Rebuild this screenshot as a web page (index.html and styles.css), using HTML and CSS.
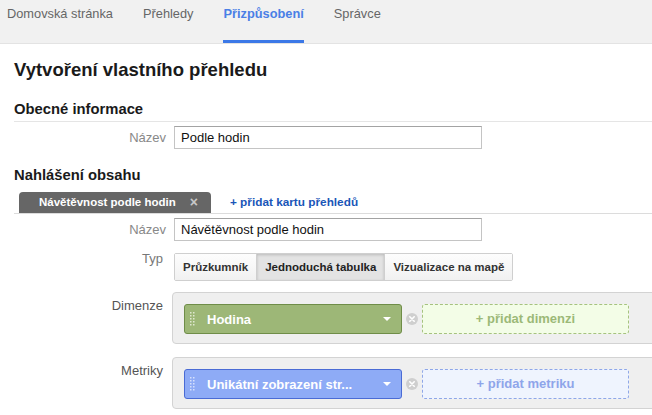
FILE: index.html
```html
<!DOCTYPE html>
<html lang="cs">
<head>
<meta charset="utf-8">
<title>Vytvoření vlastního přehledu</title>
<link rel="stylesheet" href="styles.css">
</head>
<body>
<nav class="topnav">
  <a class="navitem">Domovská stránka</a>
  <a class="navitem">Přehledy</a>
  <a class="navitem active">Přizpůsobení</a>
  <a class="navitem">Správce</a>
</nav>
<main class="page">
  <h1 class="title">Vytvoření vlastního přehledu</h1>
  <h2 class="section ruled">Obecné informace</h2>
  <div class="row row-center first">
    <span class="lbl">Název</span>
    <div class="field">Podle hodin</div>
  </div>

  <h2 class="section content-head">Nahlášení obsahu</h2>
  <div class="tabs">
    <div class="tab">Návětěvnost podle hodin<span class="tab-x">×</span></div>
    <a class="addtab">+ přidat kartu přehledů</a>
  </div>
  <div class="row row-center second">
    <span class="lbl">Název</span>
    <div class="field">Návětěvnost podle hodin</div>
  </div>

  <div class="row row-top typ">
    <span class="lbl lbl-narrow lbl-typ">Typ</span>
    <div class="btngroup">
      <span class="btn">Průzkumník</span>
      <span class="btn selected">Jednoduchá tabulka</span>
      <span class="btn">Vizualizace na mapě</span>
    </div>
  </div>

  <div class="row row-top dim">
    <span class="lbl lbl-narrow lbl-box">Dimenze</span>
    <div class="box">
      <div class="chip chip-green">
        <svg class="dots" width="5" height="14" viewBox="0 0 5 14"><g fill="#dfe8cf"><rect x="0" y="0" width="1.5" height="1.5"/><rect x="3" y="0" width="1.5" height="1.5"/><rect x="0" y="3" width="1.5" height="1.5"/><rect x="3" y="3" width="1.5" height="1.5"/><rect x="0" y="6" width="1.5" height="1.5"/><rect x="3" y="6" width="1.5" height="1.5"/><rect x="0" y="9" width="1.5" height="1.5"/><rect x="3" y="9" width="1.5" height="1.5"/><rect x="0" y="12" width="1.5" height="1.5"/><rect x="3" y="12" width="1.5" height="1.5"/></g></svg>
        <span class="chip-text">Hodina</span>
        <span class="caret"></span>
      </div>
      <svg class="remove" width="12" height="12" viewBox="0 0 12 12"><circle cx="6" cy="6" r="6" fill="#cfcfcf"/><path d="M3.8 3.8 L8.2 8.2 M8.2 3.8 L3.8 8.2" stroke="#fff" stroke-width="1.6" stroke-linecap="round"/></svg>
      <div class="add add-green">+ přidat dimenzi</div>
    </div>
  </div>

  <div class="row row-top met">
    <span class="lbl lbl-narrow lbl-box">Metriky</span>
    <div class="box">
      <div class="chip chip-blue">
        <svg class="dots" width="5" height="14" viewBox="0 0 5 14"><g fill="#d6e0fb"><rect x="0" y="0" width="1.5" height="1.5"/><rect x="3" y="0" width="1.5" height="1.5"/><rect x="0" y="3" width="1.5" height="1.5"/><rect x="3" y="3" width="1.5" height="1.5"/><rect x="0" y="6" width="1.5" height="1.5"/><rect x="3" y="6" width="1.5" height="1.5"/><rect x="0" y="9" width="1.5" height="1.5"/><rect x="3" y="9" width="1.5" height="1.5"/><rect x="0" y="12" width="1.5" height="1.5"/><rect x="3" y="12" width="1.5" height="1.5"/></g></svg>
        <span class="chip-text">Unikátní zobrazení str...</span>
        <span class="caret"></span>
      </div>
      <svg class="remove" width="12" height="12" viewBox="0 0 12 12"><circle cx="6" cy="6" r="6" fill="#cfcfcf"/><path d="M3.8 3.8 L8.2 8.2 M8.2 3.8 L3.8 8.2" stroke="#fff" stroke-width="1.6" stroke-linecap="round"/></svg>
      <div class="add add-blue">+ přidat metriku</div>
    </div>
  </div>
</main>
</body>
</html>
```
FILE: styles.css
```css
html { overflow: hidden; }
body {
  margin: 0;
  font-family: "Liberation Sans", Arial, sans-serif;
  color: #222;
  background: #fff;
}

.topnav {
  display: flex;
  gap: 30px;
  height: 43px;
  padding-left: 7px;
  background: #f1f1f1;
  border-bottom: 1px solid #e3e3e3;
}
.navitem {
  box-sizing: border-box;
  height: 43px;
  padding-top: 6px;
  font-size: 12.8px;
  line-height: 16px;
  color: #666;
  border-bottom: 3px solid transparent;
  cursor: pointer;
}
.navitem.active {
  color: #4a7fe6;
  font-weight: bold;
  border-bottom-color: #3b78e7;
}

.page { padding-left: 14px; }

.title {
  margin: 15px 0 0;
  font-size: 18.5px;
  line-height: 22px;
  font-weight: bold;
  color: #1a1a1a;
}
.section {
  margin: 0;
  font-size: 14.8px;
  line-height: 18px;
  font-weight: bold;
  color: #1a1a1a;
}
.ruled {
  margin-top: 19px;
  padding-bottom: 3px;
  border-bottom: 1px solid #e5e5e5;
}
.content-head { margin-top: 17px; }

.row { display: flex; }
.row-center { align-items: center; }
.row-top { align-items: flex-start; }
.first { margin-top: 4px; }
.second { margin-top: 4px; }
.typ { margin-top: 12px; }
.dim { margin-top: 11px; }
.met { margin-top: 13px; }

.lbl {
  box-sizing: border-box;
  width: 152px;
  margin-right: 8px;
  text-align: right;
  font-size: 13px;
  line-height: 16px;
  color: #888;
}
.lbl-narrow { padding-right: 3px; }
.lbl-typ { margin-top: -2px; color: #777; }
.lbl-box { padding-top: 6px; color: #555; }

.field {
  box-sizing: border-box;
  width: 308px;
  height: 23px;
  padding: 0 6px;
  border: 1px solid #c4c4c4;
  border-top-color: #a3a3a3;
  font-size: 13px;
  line-height: 21px;
  color: #111;
}

.tabs {
  display: flex;
  align-items: flex-end;
  gap: 19px;
  margin-top: 8px;
  padding-left: 5px;
  border-bottom: 1px solid #dcdcdc;
}
.tab {
  display: flex;
  align-items: center;
  height: 21px;
  padding: 0 13px 0 20px;
  background: #666;
  border-radius: 4px 4px 0 0;
  color: #fff;
  font-size: 11.5px;
  font-weight: bold;
  line-height: 21px;
}
.tab-x {
  margin-left: 14px;
  color: #c8c8c8;
  font-size: 14px;
}
.addtab {
  font-size: 11.8px;
  font-weight: bold;
  line-height: 21px;
  color: #1a56b8;
  cursor: pointer;
}

.btngroup {
  display: flex;
  height: 28px;
  border: 1px solid #cfcfcf;
  border-radius: 2px;
  box-sizing: border-box;
}
.btn {
  padding: 0 8px;
  font-size: 11.5px;
  font-weight: bold;
  line-height: 26px;
  color: #333;
  background: linear-gradient(#fdfdfd, #f1f1f1);
}
.btn + .btn { border-left: 1px solid #cfcfcf; }
.btn.selected {
  background: #e3e3e3;
  box-shadow: inset 0 1px 3px rgba(0,0,0,0.18);
  color: #222;
}

.box {
  flex: 1;
  display: flex;
  align-items: flex-start;
  margin-left: -2px;
  margin-right: -20px;
  padding: 11px 11px 9px;
  background: #efefef;
  border: 1px solid #d3d3d3;
  border-radius: 4px;
}
.chip {
  box-sizing: border-box;
  display: flex;
  align-items: center;
  width: 218px;
  height: 30px;
  padding: 0 10px 0 5px;
  border: 1px solid;
  border-radius: 3px;
  color: #fff;
  font-size: 13px;
  font-weight: bold;
}
.chip-green { background: #9db777; border-color: #6f8d48; }
.chip-blue { background: #8eabf6; border-color: #4a6bd5; }
.dots { flex: none; }
.chip-text { flex: 1; margin-left: 12px; white-space: nowrap; }
.caret {
  width: 0;
  height: 0;
  border-left: 4px solid transparent;
  border-right: 4px solid transparent;
  border-top: 4px solid #fff;
}
.remove { flex: none; margin: 9px 4px 0; }
.add {
  box-sizing: border-box;
  width: 207px;
  height: 30px;
  border: 1px dashed;
  border-radius: 3px;
  text-align: center;
  font-size: 13px;
  font-weight: bold;
  line-height: 28px;
}
.add-green { background: #f3fde7; border-color: #a6c27f; color: #9cb977; }
.add-blue { background: #eff4fe; border-color: #8fa7e8; color: #8ea5ea; }
```
